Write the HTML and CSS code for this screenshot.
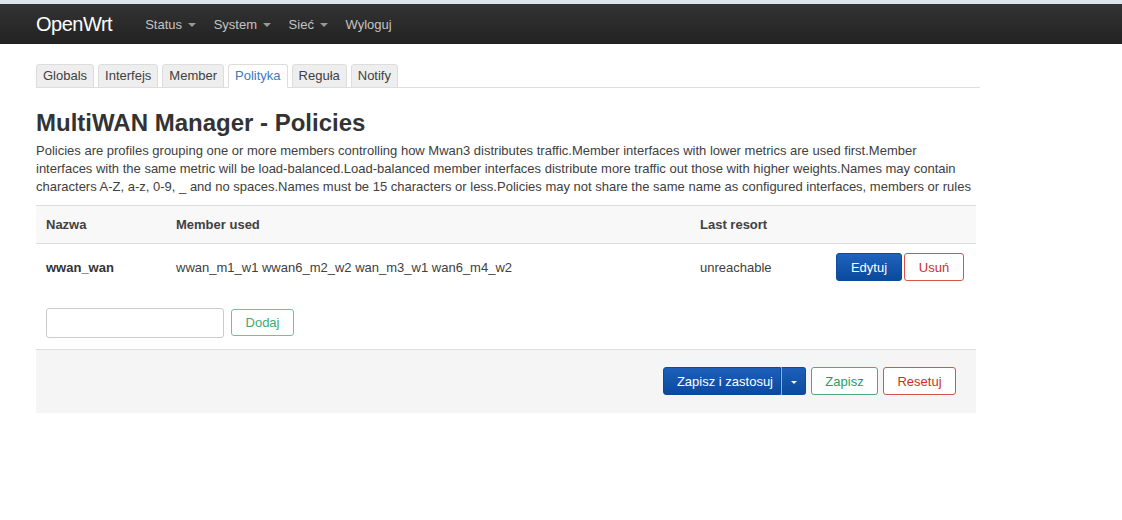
FILE: index.html
```html
<!DOCTYPE html>
<html lang="pl">

<head>
    <meta charset="UTF-8">
    <meta name="viewport" content="width=device-width, initial-scale=1.0">
    <title>MultiWAN Manager - Policies</title>
    <link rel="stylesheet" href="styles.css">
</head>

<body>
    <div class="topline"></div>
    <header class="navbar">
        <a class="brand" href="#">OpenWrt</a>
        <ul class="nav">
            <li><a href="#">Status <span class="caret"></span></a></li>
            <li><a href="#">System <span class="caret"></span></a></li>
            <li><a href="#">Sieć <span class="caret"></span></a></li>
            <li><a href="#">Wyloguj</a></li>
        </ul>
    </header>

    <div class="main">
        <ul class="tabs">
            <li><a href="#">Globals</a></li>
            <li><a href="#">Interfejs</a></li>
            <li><a href="#">Member</a></li>
            <li class="active"><a href="#">Polityka</a></li>
            <li><a href="#">Reguła</a></li>
            <li><a href="#">Notify</a></li>
        </ul>

        <h2>MultiWAN Manager - Policies</h2>
        <p class="desc">Policies are profiles grouping one or more members controlling how Mwan3 distributes traffic.Member interfaces with lower metrics are used first.Member interfaces with the same metric will be load-balanced.Load-balanced member interfaces distribute more traffic out those with higher weights.Names may contain characters A-Z, a-z, 0-9, _ and no spaces.Names must be 15 characters or less.Policies may not share the same name as configured interfaces, members or rules</p>

        <table class="table">
            <thead>
                <tr>
                    <th class="col-name">Nazwa</th>
                    <th class="col-members">Member used</th>
                    <th class="col-last">Last resort</th>
                    <th class="col-actions"></th>
                </tr>
            </thead>
            <tbody>
                <tr>
                    <td><strong>wwan_wan</strong></td>
                    <td>wwan_m1_w1 wwan6_m2_w2 wan_m3_w1 wan6_m4_w2</td>
                    <td>unreachable</td>
                    <td>
                        <div class="actions">
                            <button class="btn btn-edit">Edytuj</button>
                            <button class="btn btn-remove">Usuń</button>
                        </div>
                    </td>
                </tr>
            </tbody>
        </table>

        <div class="add-row">
            <input type="text" class="add-input">
            <button class="btn btn-add">Dodaj</button>
        </div>

        <div class="page-actions">
            <div class="split">
                <button class="btn btn-apply">Zapisz i zastosuj</button>
                <button class="btn btn-apply btn-drop"><span class="caret"></span></button>
            </div>
            <button class="btn btn-save">Zapisz</button>
            <button class="btn btn-reset">Resetuj</button>
        </div>
    </div>
</body>

</html>
```

FILE: styles.css
```css
* {
    box-sizing: border-box;
}

body {
    margin: 0;
    padding: 0;
    font-family: "Liberation Sans", Arial, sans-serif;
    font-size: 13px;
    color: #404040;
    background: #fff;
}

a {
    text-decoration: none;
}

/* strip above the bar */
.topline {
    height: 4px;
    background: #dce4ec;
}

.navbar {
    height: 40px;
    display: flex;
    align-items: center;
    padding-left: 36px;
    background: linear-gradient(#333, #222);
}

.brand {
    color: #fff;
    font-size: 20px;
    letter-spacing: -0.5px;
    margin-right: 24px;
}

.nav {
    display: flex;
    list-style: none;
    margin: 0;
    padding: 0;
}

.nav a {
    display: block;
    padding: 0 9px;
    color: #c4c4c4;
    font-size: 13px;
}

.caret {
    display: inline-block;
    width: 0;
    height: 0;
    margin-left: 2px;
    vertical-align: middle;
    border-left: 4px solid transparent;
    border-right: 4px solid transparent;
    border-top: 4px solid #999;
}

.main {
    width: 944px;
    margin-left: 36px;
    padding-top: 20px;
}

/* tabs */
.tabs {
    display: flex;
    gap: 4px;
    list-style: none;
    margin: 0;
    padding: 0;
    border-bottom: 1px solid #ddd;
}

.tabs li {
    margin-bottom: -1px;
}

.tabs a {
    display: block;
    height: 24px;
    line-height: 22px;
    padding: 0 6px;
    color: #404040;
    background: #eee;
    border: 1px solid #ddd;
    border-radius: 3px 3px 0 0;
}

.tabs .active a {
    color: #3b7ac0;
    background: #fff;
    border-bottom-color: #fff;
}

h2 {
    margin: 20px 0 4px;
    font-size: 24px;
    line-height: 30px;
    color: #333;
}

.desc {
    margin: 0 0 9px;
    line-height: 18px;
    color: #404040;
    width: 940px;
}

/* policy table */
.table {
    width: 940px;
    border-collapse: collapse;
}

.table th {
    height: 38px;
    padding: 0 10px;
    text-align: left;
    color: #404040;
    background: #f8f8f8;
    border-top: 1px solid #ddd;
    border-bottom: 1px solid #ddd;
}

.table td {
    height: 47px;
    padding: 0 10px;
    color: #404040;
    vertical-align: middle;
}

.table td strong {
    color: #333;
}

.col-name {
    width: 130px;
}

.col-members {
    width: 524px;
}

.col-last {
    width: 136px;
}

.actions {
    display: flex;
    gap: 2px;
    align-items: center;
}

.btn {
    height: 28px;
    padding: 0 13px;
    font-family: inherit;
    font-size: 13px;
    background: #fff;
    border: 1px solid #ccc;
    border-radius: 3px;
}

.btn-edit {
    width: 66px;
    color: #fff;
    background: linear-gradient(#1f63be, #0b4a9c);
    border-color: #0b4a9c;
}

.btn-remove {
    width: 60px;
    color: #c9302c;
    border-color: #d9534f;
}

.add-row {
    display: flex;
    align-items: center;
    gap: 7px;
    padding: 17px 10px 11px;
}

.add-input {
    width: 178px;
    height: 30px;
    border: 1px solid #ccc;
    border-radius: 3px;
}

.btn-add {
    width: 63px;
    height: 27px;
    color: #3daa73;
    border-color: #6fc397;
}

/* bottom bar with save buttons */
.page-actions {
    width: 940px;
    height: 64px;
    display: flex;
    justify-content: flex-end;
    align-items: center;
    gap: 5px;
    padding-right: 20px;
    background: #f5f5f5;
    border-top: 1px solid #ddd;
}

.split {
    display: flex;
}

.btn-apply {
    color: #fff;
    background: linear-gradient(#1c5fba, #0b4b9e);
    border-color: #0b4a9c;
    padding: 0 7px 0 13px;
    border-radius: 3px 0 0 3px;
}

.btn-drop {
    width: 25px;
    padding: 0;
    border-left: 1px solid #8fb0dc;
    border-radius: 0 3px 3px 0;
}

.btn-drop .caret {
    margin: 0;
    border-top-color: #fff;
    border-width: 3px 3px 0;
}

.btn-save {
    width: 67px;
    color: #2f9a5f;
    border-color: #4cae74;
}

.btn-reset {
    width: 73px;
    color: #c9302c;
    border-color: #d9534f;
}
```
